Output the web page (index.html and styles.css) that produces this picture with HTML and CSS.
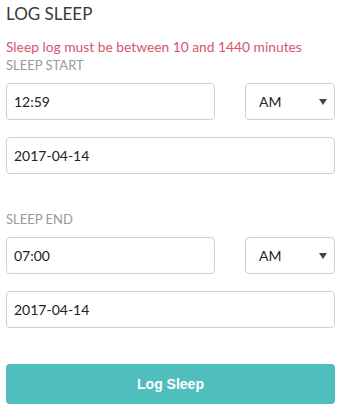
FILE: index.html
```html
<!DOCTYPE html>
<html>
<head>
<meta charset="utf-8">
<link rel="stylesheet" href="styles.css">
</head>
<body>
<form class="log-form">
  <h1 class="title">LOG SLEEP</h1>
  <p class="error">Sleep log must be between 10 and 1440 minutes</p>
  <div class="section">
    <label class="label">SLEEP START</label>
    <div class="row">
      <input class="field time" type="text" value="12:59">
      <div class="select-wrap">
        <select class="field select"><option>AM</option><option>PM</option></select>
        <span class="arrow"></span>
      </div>
    </div>
    <input class="field date" type="text" value="2017-04-14">
  </div>
  <div class="section section-end">
    <label class="label">SLEEP END</label>
    <div class="row">
      <input class="field time" type="text" value="07:00">
      <div class="select-wrap">
        <select class="field select"><option>AM</option><option>PM</option></select>
        <span class="arrow"></span>
      </div>
    </div>
    <input class="field date" type="text" value="2017-04-14">
  </div>
  <button class="submit" type="button">Log Sleep</button>
</form>
</body>
</html>
```
FILE: styles.css
```css
html, body {
  margin: 0;
  padding: 0;
  background: #fff;
}
body {
  font-family: Lato, "Open Sans", sans-serif;
  color: #333;
}
.log-form {
  width: 329px;
  margin-left: 6px;
  padding-top: 4px;
  display: flex;
  flex-direction: column;
}
.title {
  margin: 0;
  font-size: 17px;
  line-height: 20px;
  font-weight: 400;
  color: #3a3a3a;
}
.error {
  margin: 14px 0 0;
  font-size: 13.8px;
  line-height: 17px;
  color: #d8566c;
}
.section {
  display: flex;
  flex-direction: column;
  margin-top: 3px;
}
.section-end {
  margin-top: 38px;
}
.label {
  font-size: 13px;
  line-height: 15px;
  color: #9a9a9a;
}
.row {
  display: flex;
  justify-content: space-between;
  margin-top: 10px;
}
.field {
  box-sizing: border-box;
  height: 37px;
  border: 1px solid #cfcfcf;
  border-radius: 4px;
  background: #fff;
  font-family: Lato, "Open Sans", sans-serif;
  font-size: 14px;
  color: #222;
  padding: 0 7px;
  outline: none;
}
.time {
  width: 209px;
}
.select-wrap {
  position: relative;
  width: 90px;
}
.select {
  width: 100%;
  -webkit-appearance: none;
  appearance: none;
  padding-left: 13px;
}
.arrow {
  position: absolute;
  right: 8px;
  top: 16px;
  width: 0;
  height: 0;
  border-left: 4px solid transparent;
  border-right: 4px solid transparent;
  border-top: 6px solid #444;
  pointer-events: none;
}
.date {
  width: 100%;
  margin-top: 17px;
}
.submit {
  margin-top: 36px;
  height: 40px;
  width: 100%;
  border: none;
  border-radius: 4px;
  background: #50bebc;
  color: #fff;
  font-family: "Liberation Sans", Arial, sans-serif;
  font-weight: 700;
  font-size: 14px;
}
```
